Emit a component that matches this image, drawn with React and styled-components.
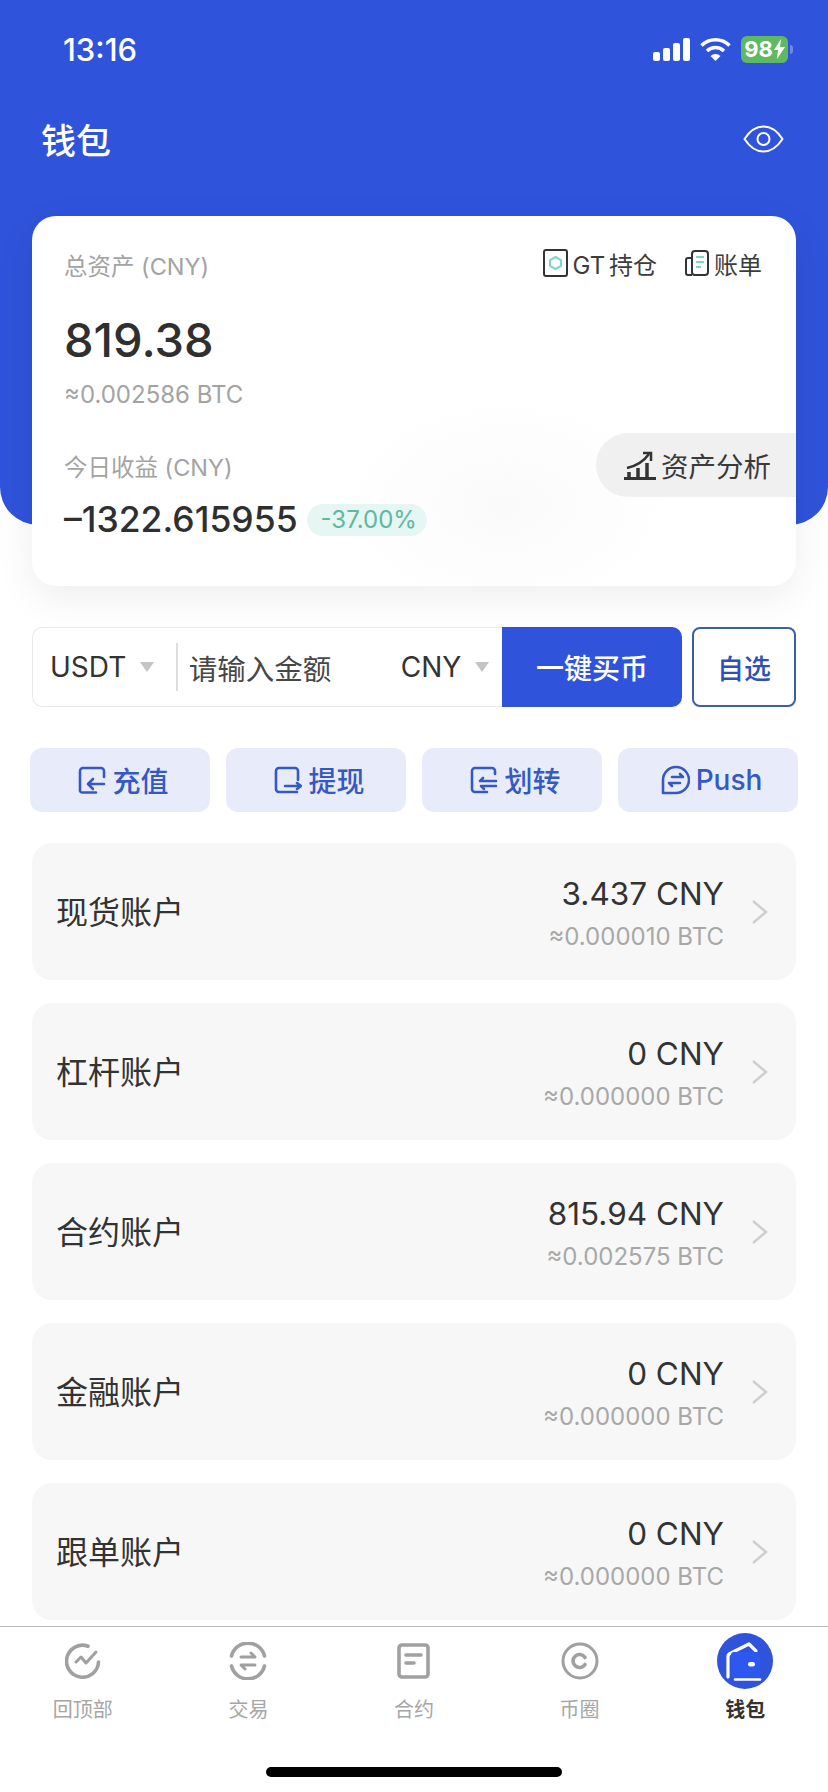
import styled, { createGlobalStyle } from 'styled-components';

const FONT = '"Inter", "Noto Sans CJK SC", "Noto Sans", sans-serif';
const BLUE = '#2f53da';

const accounts = [
  { name: '现货账户', value: '3.437 CNY', btc: '≈0.000010 BTC' },
  { name: '杠杆账户', value: '0 CNY', btc: '≈0.000000 BTC' },
  { name: '合约账户', value: '815.94 CNY', btc: '≈0.002575 BTC' },
  { name: '金融账户', value: '0 CNY', btc: '≈0.000000 BTC' },
  { name: '跟单账户', value: '0 CNY', btc: '≈0.000000 BTC' },
];

const DepositIcon = () => (
  <svg width="28" height="28" viewBox="0 0 28 28" fill="none" stroke="#3558c4" strokeWidth="2.600" strokeLinecap="round" strokeLinejoin="round">
    <path d="M26 11V5a3 3 0 0 0-3-3H5a3 3 0 0 0-3 3v20a2 2 0 0 0 2 1.500h14" />
    <path d="M26 18H11M15 13l-5 5 5 5" />
  </svg>
);

const WithdrawIcon = () => (
  <svg width="28" height="28" viewBox="0 0 28 28" fill="none" stroke="#3558c4" strokeWidth="2.600" strokeLinecap="round" strokeLinejoin="round">
    <path d="M24 14V5a3 3 0 0 0-3-3H5a3 3 0 0 0-3 3v18a3 3 0 0 0 3 3h18" />
    <path d="M11 20h15M23 17l4 3-4 3" />
  </svg>
);

const TransferIcon = () => (
  <svg width="28" height="28" viewBox="0 0 28 28" fill="none" stroke="#3558c4" strokeWidth="2.600" strokeLinecap="round" strokeLinejoin="round">
    <path d="M25 8V5a3 3 0 0 0-3-3H5a3 3 0 0 0-3 3v18a3 3 0 0 0 3 3h12" />
    <path d="M13 12l-3 3h16M26 20H11l3 3" />
  </svg>
);

const PushIcon = () => (
  <svg width="29" height="30" viewBox="0 0 29 30" fill="none" stroke="#3558c4" strokeWidth="2.600" strokeLinecap="round" strokeLinejoin="round">
    <path d="M2 28V15a13 13 0 1 1 13 13z" />
    <path d="M11 12h11l-3-3M19 18H8l3 3" />
  </svg>
);

const actions = [
  { label: '充值', Icon: DepositIcon },
  { label: '提现', Icon: WithdrawIcon },
  { label: '划转', Icon: TransferIcon },
  { label: 'Push', Icon: PushIcon },
];

const TopIcon = () => (
  <svg width="36" height="36" viewBox="0 0 36 36" fill="none" stroke="#a0a0a0" strokeWidth="3.600" strokeLinecap="round" strokeLinejoin="round">
    <path d="M23 3.200A16 16 0 1 0 33.500 19" />
    <path d="M11 19l5-5 5 6 10-11" strokeWidth="3" />
  </svg>
);

const TradeIcon = () => (
  <svg width="38" height="38" viewBox="0 0 38 38" fill="none" stroke="#a0a0a0" strokeWidth="3.600" strokeLinecap="round" strokeLinejoin="round">
    <path d="M2.500 14A17 17 0 0 1 35.500 14M35.500 24A17 17 0 0 1 2.500 24" />
    <path d="M12 15h14l-4-4M26 23H12l4 4" strokeWidth="3" />
  </svg>
);

const ContractIcon = () => (
  <svg width="33" height="36" viewBox="0 0 33 36" fill="none" stroke="#a0a0a0" strokeWidth="3.600" strokeLinecap="round" strokeLinejoin="round">
    <rect x="2" y="2" width="29" height="32" rx="3" />
    <path d="M9 12h15M9 20h8" />
  </svg>
);

const CircleIcon = () => (
  <svg width="38" height="38" viewBox="0 0 38 38" fill="none" stroke="#a0a0a0" strokeWidth="3" strokeLinecap="round">
    <circle cx="19" cy="19" r="17" />
    <path d="M24 15.500a6.500 6.500 0 1 0 0 7" strokeWidth="3.600" />
  </svg>
);

const WalletIcon = () => (
  <svg width="56" height="56" viewBox="0 0 56 56">
    <circle cx="28" cy="28" r="28" fill={BLUE} />
    <path d="M11 44V24a4 4 0 0 1 3-4L32 11l7 7" fill="none" stroke="#fff" strokeWidth="3.200" strokeLinecap="round" strokeLinejoin="round" />
    <path d="M18 46.500h25" fill="none" stroke="#fff" strokeWidth="2.500" strokeLinecap="round" />
    <rect x="14" y="19" width="29" height="26" rx="3" fill="#2c58f0" />
    <rect x="31" y="29" width="7" height="4.500" rx="2.200" fill="#fff" />
  </svg>
);

const tabs = [
  { label: '回顶部', Icon: TopIcon },
  { label: '交易', Icon: TradeIcon },
  { label: '合约', Icon: ContractIcon },
  { label: '币圈', Icon: CircleIcon },
  { label: '钱包', Icon: WalletIcon, active: true },
];

export default function App() {
  return (
    <Page>
      <GlobalStyle />
      <Hero>
        <StatusBar>
          <Clock>13:16</Clock>
          <StatusIcons>
            <svg width="37" height="23" viewBox="0 0 37 23" fill="#fff">
              <rect x="0" y="14" width="7" height="9" rx="2" />
              <rect x="10" y="10" width="7" height="13" rx="2" />
              <rect x="20" y="5" width="7" height="18" rx="2" />
              <rect x="30" y="0" width="7" height="23" rx="2" />
            </svg>
            <svg width="31" height="23" viewBox="0 0 31 23" fill="none" stroke="#fff" strokeWidth="3.500">
              <path d="M1.500 7.500a20 20 0 0 1 28 0" />
              <path d="M7 13a12 12 0 0 1 17 0" />
              <path d="M15.500 23l-5-5a7 7 0 0 1 10 0z" fill="#fff" stroke="none" />
            </svg>
            <Battery>
              98
              <svg width="11" height="20" viewBox="0 0 11 20" fill="#fff">
                <path d="M7 0L0 11h4l-1 9 8-12H6z" />
              </svg>
            </Battery>
          </StatusIcons>
        </StatusBar>
        <TitleRow>
          <Title>钱包</Title>
          <svg width="41" height="28" viewBox="0 0 41 28" fill="none" stroke="#fff" strokeWidth="2">
            <path d="M1.500 14C7 5.500 13 1.500 20.500 1.500S34 5.500 39.500 14C34 22.500 28 26.500 20.500 26.500S7 22.500 1.500 14z" />
            <circle cx="20.500" cy="14" r="6" />
          </svg>
        </TitleRow>
        <Card>
          <CardTop>
            <Muted>总资产 (CNY)</Muted>
            <CardLinks>
              <CardLink>
                <svg width="25" height="28" viewBox="0 0 25 28" fill="none">
                  <rect x="1" y="1" width="23" height="26" rx="2" stroke="#333" strokeWidth="2" />
                  <path d="M12.500 8l5.500 3v6l-5.500 3L7 17v-6z" stroke="#7fd8bd" strokeWidth="2" />
                </svg>
                GT 持仓
              </CardLink>
              <CardLink>
                <svg width="24" height="26" viewBox="0 0 24 26" fill="none">
                  <path d="M7 8H3a2 2 0 0 0-2 2v13a2 2 0 0 0 2 2h4" stroke="#333" strokeWidth="2" />
                  <rect x="7" y="1" width="16" height="24" rx="3" stroke="#333" strokeWidth="2" />
                  <path d="M11 7h8M11 12h8M11 17h5" stroke="#7fd8bd" strokeWidth="2" />
                </svg>
                账单
              </CardLink>
            </CardLinks>
          </CardTop>
          <TotalValue>819.38</TotalValue>
          <BtcLine>≈0.002586 BTC</BtcLine>
          <CardBottom>
            <div>
              <Muted>今日收益 (CNY)</Muted>
              <ProfitRow>
                <ProfitValue>–1322.615955</ProfitValue>
                <Badge>-37.00%</Badge>
              </ProfitRow>
            </div>
            <AnalysisPill>
              <svg width="32" height="30" viewBox="0 0 32 30" fill="none" stroke="#333" strokeWidth="3">
                <path d="M0 28.500h32" />
                <path d="M3 18c9-2 17-7 22-14" strokeWidth="2.500" />
                <path d="M19 3h8v8" strokeWidth="2.500" />
                <path d="M5 27v-5M14 27v-9M23 27V13" strokeWidth="3.500" />
              </svg>
              资产分析
            </AnalysisPill>
          </CardBottom>
        </Card>
      </Hero>

      <TradeRow>
        <AmountBox>
          <Currency>USDT</Currency>
          <Caret />
          <Divider />
          <Placeholder>请输入金额</Placeholder>
          <Currency>CNY</Currency>
          <Caret />
        </AmountBox>
        <BuyButton>一键买币</BuyButton>
        <PickButton>自选</PickButton>
      </TradeRow>

      <ActionRow>
        {actions.map(({ label, Icon }) => (
          <ActionButton key={label}>
            <Icon />
            {label}
          </ActionButton>
        ))}
      </ActionRow>

      <AccountList>
        {accounts.map((account) => (
          <AccountRow key={account.name}>
            <AccountName>{account.name}</AccountName>
            <AccountAmounts>
              <AccountValue>{account.value}</AccountValue>
              <AccountBtc>{account.btc}</AccountBtc>
            </AccountAmounts>
            <svg width="17" height="26" viewBox="0 0 17 26" fill="none" stroke="#cfcfcf" strokeWidth="2.500">
              <path d="M2 2l13 11L2 24" />
            </svg>
          </AccountRow>
        ))}
      </AccountList>

      <TabBar>
        <Tabs>
          {tabs.map(({ label, Icon, active }) => (
            <Tab key={label}>
              <TabIcon>
                <Icon />
              </TabIcon>
              <TabLabel $active={active}>{label}</TabLabel>
            </Tab>
          ))}
        </Tabs>
        <HomeBar />
      </TabBar>
    </Page>
  );
}

const GlobalStyle = createGlobalStyle`
  html, body {
    margin: 0;
    padding: 0;
    background: #fff;
    overflow: hidden;
  }
  * {
    box-sizing: border-box;
  }
`;

const Page = styled.div`
  width: 828px;
  height: 1792px;
  background: #fff;
  font-family: ${FONT};
  color: #333;
  display: flex;
  flex-direction: column;
`;

const Hero = styled.section`
  position: relative;
  padding: 0 32px;

  &::before {
    content: '';
    position: absolute;
    inset: 0 0 auto 0;
    height: 525px;
    background: ${BLUE};
    border-radius: 0 0 38px 38px;
  }
  & > * {
    position: relative;
  }
`;

const StatusBar = styled.div`
  height: 100px;
  margin: 0 8px 0 31px;
  padding-bottom: 2px;
  display: flex;
  align-items: center;
  justify-content: space-between;
`;

const Clock = styled.div`
  font-size: 31px;
  font-weight: 500;
  color: #fff;
`;

const StatusIcons = styled.div`
  display: flex;
  align-items: center;
  gap: 10px;
`;

const Battery = styled.div`
  position: relative;
  width: 47px;
  height: 27px;
  border-radius: 6px;
  background: #5fb862;
  color: #fff;
  font-size: 22px;
  font-weight: 700;
  display: flex;
  align-items: center;
  justify-content: center;
  gap: 1px;

  &::after {
    content: '';
    position: absolute;
    right: -5px;
    top: 9px;
    width: 3px;
    height: 9px;
    border-radius: 0 3px 3px 0;
    background: #6f8ae6;
  }
`;

const TitleRow = styled.div`
  height: 80px;
  margin: 0 12px 0 9px;
  padding-bottom: 3px;
  display: flex;
  align-items: center;
  justify-content: space-between;
`;

const Title = styled.h1`
  margin: 0;
  font-size: 35px;
  font-weight: 500;
  color: #fff;
`;

const Card = styled.div`
  margin-top: 36px;
  height: 370px;
  padding: 34px 0 0 32px;
  border-radius: 24px;
  overflow: hidden;
  background:
    radial-gradient(ellipse 170px 110px at 62% 78%, #fafafa, rgba(255, 255, 255, 0)),
    #fff;
  box-shadow: 0 12px 40px rgba(0, 0, 0, 0.07);
`;

const CardTop = styled.div`
  display: flex;
  justify-content: space-between;
  align-items: center;
  padding-right: 34px;
`;

const Muted = styled.div`
  font-size: 23.500px;
  line-height: 34px;
  color: #a3a3a3;
`;

const BtcLine = styled(Muted)`
  margin-top: 9px;
  font-size: 24px;
`;

const CardLinks = styled.div`
  display: flex;
  align-items: center;
  gap: 28px;
  margin-top: -8px;
`;

const CardLink = styled.div`
  display: flex;
  align-items: center;
  gap: 5px;
  font-size: 24px;
  word-spacing: -3px;
  color: #3c3c3c;
`;

const TotalValue = styled.div`
  margin-top: 27px;
  font-size: 47px;
  line-height: 58px;
  font-weight: 500;
  color: #2f2f2f;
`;

const CardBottom = styled.div`
  margin-top: 39px;
  display: flex;
  justify-content: space-between;
  align-items: flex-start;
`;

const ProfitRow = styled.div`
  margin-top: 13px;
  display: flex;
  align-items: center;
  gap: 9px;
`;

const ProfitValue = styled.div`
  font-size: 35.500px;
  line-height: 44px;
  font-weight: 500;
  color: #2f2f2f;
`;

const Badge = styled.div`
  height: 32px;
  padding: 0 10px 0 14px;
  border-radius: 16px;
  background: #e6f6f2;
  color: #5cb8a2;
  font-size: 24px;
  line-height: 32px;
`;

const AnalysisPill = styled.div`
  margin-top: -18px;
  width: 200px;
  height: 64px;
  padding-left: 28px;
  border-radius: 32px 0 0 32px;
  background: #f0f0f0;
  display: flex;
  align-items: center;
  gap: 5px;
  font-size: 27.500px;
  color: #3a3a3a;
`;

const TradeRow = styled.div`
  margin: 41px 32px 0;
  height: 80px;
  display: flex;
`;

const AmountBox = styled.div`
  width: 470px;
  padding-left: 17px;
  border: 1px solid #e8e8e8;
  border-right: none;
  border-radius: 10px 0 0 10px;
  display: flex;
  align-items: center;
`;

const Currency = styled.div`
  font-size: 28px;
  color: #333;
`;

const Caret = styled.div`
  margin-left: 14px;
  width: 0;
  height: 0;
  border-left: 7px solid transparent;
  border-right: 7px solid transparent;
  border-top: 10px solid #c4c4c4;
`;

const Divider = styled.div`
  margin: 0 11px 0 22px;
  width: 1.500px;
  height: 48px;
  background: #dedede;
`;

const Placeholder = styled.div`
  width: 212px;
  font-size: 28.500px;
  color: #474747;
`;

const BuyButton = styled.div`
  width: 180px;
  border-radius: 0 10px 10px 0;
  background: ${BLUE};
  color: #fff;
  font-size: 28px;
  font-weight: 500;
  display: flex;
  align-items: center;
  justify-content: center;
`;

const PickButton = styled.div`
  margin-left: 10px;
  width: 104px;
  border: 2px solid #3f5ea8;
  border-radius: 8px;
  color: #2f50b8;
  font-size: 27px;
  font-weight: 500;
  display: flex;
  align-items: center;
  justify-content: center;
`;

const ActionRow = styled.div`
  margin: 41px 30px 0;
  display: grid;
  grid-template-columns: repeat(4, 180px);
  gap: 16px;
`;

const ActionButton = styled.div`
  height: 64px;
  padding-left: 7px;
  border-radius: 12px;
  background: #e8ecfa;
  color: #3558c4;
  font-size: 28px;
  font-weight: 500;
  display: flex;
  align-items: center;
  justify-content: center;
  gap: 6px;
`;

const AccountList = styled.div`
  margin: 31px 32px 0;
  display: flex;
  flex-direction: column;
  gap: 23px;
`;

const AccountRow = styled.div`
  height: 137px;
  padding: 0 28px 0 24px;
  border-radius: 20px;
  background: #f7f7f7;
  display: flex;
  align-items: center;
`;

const AccountName = styled.div`
  flex: 1;
  padding-bottom: 4px;
  font-size: 32px;
  color: #333;
`;

const AccountAmounts = styled.div`
  margin-right: 27px;
  padding-top: 6px;
  text-align: right;
`;

const AccountValue = styled.div`
  font-size: 31.500px;
  line-height: 40px;
  color: #333;
`;

const AccountBtc = styled.div`
  margin-top: 4px;
  font-size: 24px;
  line-height: 38px;
  color: #a8a8a8;
`;

const TabBar = styled.nav`
  margin-top: 6px;
  flex: 1;
  border-top: 1.500px solid #b9b9b9;
  background: #fff;
  display: flex;
  flex-direction: column;
`;

const Tabs = styled.div`
  display: grid;
  grid-template-columns: repeat(5, 1fr);
`;

const Tab = styled.div`
  display: flex;
  flex-direction: column;
  align-items: center;
`;

const TabIcon = styled.div`
  margin-top: 6px;
  height: 56px;
  display: flex;
  align-items: center;
  justify-content: center;
`;

const TabLabel = styled.div`
  margin-top: 7px;
  font-size: 20px;
  line-height: 28px;
  color: ${({ $active }) => ($active ? '#333' : '#a6a6a6')};
  font-weight: ${({ $active }) => ($active ? 600 : 400)};
`;

const HomeBar = styled.div`
  margin: 43px auto 0;
  width: 296px;
  height: 10px;
  border-radius: 5px;
  background: #000;
`;
